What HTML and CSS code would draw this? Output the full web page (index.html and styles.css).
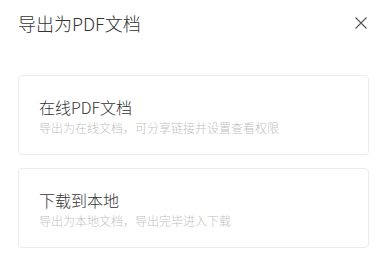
FILE: index.html
```html
<!DOCTYPE html>
<html lang="zh-CN">
<head>
<meta charset="utf-8">
<link rel="stylesheet" href="styles.css">
</head>
<body>
<div class="dialog">
  <div class="header">
    <div class="title">导出为PDF文档</div>
    <button class="close" aria-label="关闭">
      <svg width="16" height="16" viewBox="0 0 16 16"><path d="M2.5 2.5L13.5 13.5M13.5 2.5L2.5 13.5" stroke="#555" stroke-width="1.1" fill="none"/></svg>
    </button>
  </div>
  <div class="options">
    <div class="card">
      <div class="card-title">在线PDF文档</div>
      <div class="card-desc">导出为在线文档，可分享链接并设置查看权限</div>
    </div>
    <div class="card">
      <div class="card-title">下载到本地</div>
      <div class="card-desc">导出为本地文档，导出完毕进入下载</div>
    </div>
  </div>
</div>
</body>
</html>
```
FILE: styles.css
```css
html, body {
  margin: 0;
  padding: 0;
  background: #fff;
}
body {
  font-family: "Noto Sans CJK SC", "Noto Sans", sans-serif;
  color: #333;
}
.dialog {
  padding: 11px 16px 0 18px;
}
.header {
  display: flex;
  align-items: center;
  justify-content: space-between;
  height: 24px;
}
.title {
  font-size: 18px;
  line-height: 24px;
  font-weight: 300;
  color: #333;
}
.close {
  width: 16px;
  height: 16px;
  padding: 0;
  margin: 0;
  border: 0;
  background: none;
  display: flex;
  align-items: center;
  justify-content: center;
}
.options {
  margin-top: 40px;
  display: flex;
  flex-direction: column;
  gap: 13px;
}
.card {
  border: 1px solid #ececec;
  border-radius: 4px;
  padding: 20px 20px 17px;
}
.card-title {
  font-size: 16px;
  line-height: 22px;
  font-weight: 300;
  color: #333;
}
.card-desc {
  margin-top: 1px;
  font-size: 12px;
  line-height: 18px;
  font-weight: 300;
  color: #bfbfbf;
}
```
